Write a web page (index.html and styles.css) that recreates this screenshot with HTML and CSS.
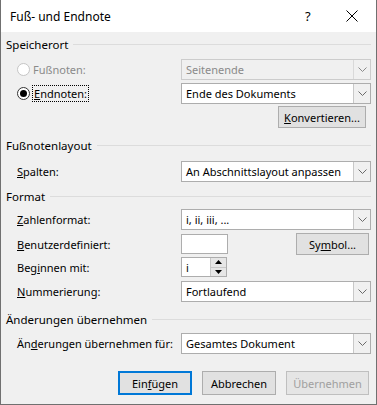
FILE: index.html
```html
<!DOCTYPE html>
<html lang="de">
<head>
  <meta charset="UTF-8" />
  <title>Fuß- und Endnote</title>
  <link rel="stylesheet" href="styles.css">
</head>
<body>
  <div class="window">
    <div class="titlebar">
      <span class="title">Fuß- und Endnote</span>
      <span class="help">?</span>
      <svg class="close" width="12" height="12" viewBox="0 0 12 12"><path d="M0.5 0.5 L11.5 11.5 M11.5 0.5 L0.5 11.5" stroke="#000" stroke-width="1"/></svg>
    </div>

    <div class="content">
      <div class="group first">
        <span>Speicherort</span><div class="line"></div>
      </div>

      <div class="row r-foot">
        <label class="lbl disabled"><span class="radio off"></span>Fußnoten:</label>
        <div class="combo disabled"><span class="val">Seitenende</span><span class="arrow"><svg width="9" height="5" viewBox="0 0 9 5"><path d="M0.5 0.5 L4.5 4.5 L8.5 0.5" fill="none" stroke="#8a8a8a"/></svg></span></div>
      </div>
      <div class="row r-end">
        <label class="lbl"><span class="radio on"></span><span class="focus"><u>E</u>ndnoten:</span></label>
        <div class="combo"><span class="val">Ende des Dokuments</span><span class="arrow"><svg width="9" height="5" viewBox="0 0 9 5"><path d="M0.5 0.5 L4.5 4.5 L8.5 0.5" fill="none" stroke="#6a6a6a"/></svg></span></div>
      </div>
      <div class="row r-conv">
        <button class="btn conv"><u>K</u>onvertieren...</button>
      </div>

      <div class="group g-layout">
        <span>Fußnotenlayout</span><div class="line"></div>
      </div>
      <div class="row r-spalten">
        <label class="lbl"><u>S</u>palten:</label>
        <div class="combo"><span class="val">An Abschnittslayout anpassen</span><span class="arrow"><svg width="9" height="5" viewBox="0 0 9 5"><path d="M0.5 0.5 L4.5 4.5 L8.5 0.5" fill="none" stroke="#6a6a6a"/></svg></span></div>
      </div>

      <div class="group g-format">
        <span>Format</span><div class="line"></div>
      </div>
      <div class="row r-zahl">
        <label class="lbl"><u>Z</u>ahlenformat:</label>
        <div class="combo"><span class="val">i, ii, iii, ...</span><span class="arrow"><svg width="9" height="5" viewBox="0 0 9 5"><path d="M0.5 0.5 L4.5 4.5 L8.5 0.5" fill="none" stroke="#6a6a6a"/></svg></span></div>
      </div>
      <div class="row r-custom">
        <label class="lbl"><u>B</u>enutzerdefiniert:</label>
        <div class="textbox"></div>
        <button class="btn sym">Sy<u>m</u>bol...</button>
      </div>
      <div class="row r-begin">
        <label class="lbl">Beg<u>i</u>nnen mit:</label>
        <div class="spin">
          <span class="val">i</span>
          <span class="spinbtns">
            <span class="up"><svg width="7" height="4" viewBox="0 0 7 4"><path d="M0 4 L3.5 0 L7 4 Z" fill="#000"/></svg></span>
            <span class="down"><svg width="7" height="4" viewBox="0 0 7 4"><path d="M0 0 L3.5 4 L7 0 Z" fill="#000"/></svg></span>
          </span>
        </div>
      </div>
      <div class="row r-num">
        <label class="lbl"><u>N</u>ummerierung:</label>
        <div class="combo"><span class="val">Fortlaufend</span><span class="arrow"><svg width="9" height="5" viewBox="0 0 9 5"><path d="M0.5 0.5 L4.5 4.5 L8.5 0.5" fill="none" stroke="#6a6a6a"/></svg></span></div>
      </div>

      <div class="group g-apply">
        <span>Änderungen übernehmen</span><div class="line"></div>
      </div>
      <div class="row r-apply">
        <label class="lbl">Än<u>d</u>erungen übernehmen für:</label>
        <div class="combo"><span class="val">Gesamtes Dokument</span><span class="arrow"><svg width="9" height="5" viewBox="0 0 9 5"><path d="M0.5 0.5 L4.5 4.5 L8.5 0.5" fill="none" stroke="#6a6a6a"/></svg></span></div>
      </div>

      <div class="buttons">
        <button class="btn default">Ein<u>f</u>ügen</button>
        <button class="btn">Abbrechen</button>
        <button class="btn off">Übernehmen</button>
      </div>
    </div>
  </div>
</body>
</html>
```

FILE: styles.css
```css
* {
  box-sizing: border-box;
}
body {
  margin: 0;
  font-family: "Noto Sans", "Open Sans", sans-serif;
  font-size: 11px;
  color: #000;
  background: #fff;
  white-space: nowrap;
}
.window {
  width: 377px;
  height: 405px;
  border: 1px solid #707070;
  border-top: none;
  background: #f0f0f0;
  display: flex;
  flex-direction: column;
  overflow: hidden;
}
.titlebar {
  flex-shrink: 0;
  height: 32px;
  background: #fff;
  display: flex;
  align-items: center;
  padding-left: 9px;
}
.title {
  flex-grow: 1;
  font-size: 12px;
}
.help {
  width: 12px;
  margin-right: 29px;
  font-size: 13px;
}
.close {
  margin-right: 18px;
}
.content {
  padding: 0 5px 0 5px;
}
.group {
  display: flex;
  align-items: center;
  height: 16px;
  margin-top: 4px;
  font-size: 11.5px;
}
.group span {
  padding-right: 5px;
}
.group .line {
  flex-grow: 1;
  border-top: 1px solid #dcdcdc;
}
.row {
  display: flex;
  align-items: center;
  padding-left: 11px;
}
.lbl {
  width: 164px;
  flex-shrink: 0;
  display: flex;
  align-items: center;
}
.lbl.disabled {
  color: #8a8a8a;
}
.radio {
  width: 13px;
  height: 13px;
  border-radius: 50%;
  border: 1px solid #333;
  background: #fff;
  margin-right: 3px;
  display: inline-flex;
  align-items: center;
  justify-content: center;
}
.radio.off {
  border-color: #c5c5c5;
}
.radio.on::after {
  content: "";
  width: 7px;
  height: 7px;
  border-radius: 50%;
  background: #000;
}
.focus {
  outline: 1px dotted #000;
  padding: 0 1px;
}
.combo {
  width: 190px;
  height: 21px;
  flex-shrink: 0;
  border: 1px solid #adadad;
  background: #fff;
  display: flex;
  align-items: stretch;
}
.combo .val {
  flex-grow: 1;
  padding-left: 4px;
  display: flex;
  align-items: center;
}
.combo .arrow {
  width: 17px;
  border-left: 1px solid #c8c8c8;
  background: #f0f0f0;
  display: flex;
  align-items: center;
  justify-content: center;
}
.combo.disabled {
  background: #f0f0f0;
  border-color: #cccccc;
  color: #8a8a8a;
}
.combo.disabled .arrow {
  border-left-color: #d9d9d9;
}
.btn {
  font-family: inherit;
  font-size: 11px;
  color: #000;
  background: #e1e1e1;
  border: 1px solid #adadad;
  height: 22px;
  padding: 0;
  flex-shrink: 0;
}
.r-foot {
  margin-top: 7px;
}
.r-end {
  margin-top: 3px;
}
.r-conv {
  margin-top: 2px;
  justify-content: flex-end;
  padding-right: 5px;
}
.conv {
  width: 88px;
}
.g-layout {
  margin-top: 9px;
}
.r-spalten {
  margin-top: 8px;
}
.g-format {
  margin-top: 6px;
}
.r-zahl {
  margin-top: 5px;
}
.r-custom {
  margin-top: 3px;
  height: 22px;
}
.textbox {
  width: 47px;
  height: 20px;
  border: 1px solid #adadad;
  background: #fff;
}
.sym {
  width: 73px;
  margin-left: 68px;
}
.r-begin {
  margin-top: 2px;
}
.spin {
  width: 46px;
  height: 20px;
  border: 1px solid #adadad;
  background: #fff;
  display: flex;
}
.spin .val {
  flex-grow: 1;
  padding-left: 4px;
  display: flex;
  align-items: center;
}
.spinbtns {
  width: 16px;
  display: flex;
  flex-direction: column;
  border-left: 1px solid #c8c8c8;
  background: #e6e6e6;
}
.spinbtns span {
  flex-grow: 1;
  display: flex;
  align-items: center;
  justify-content: center;
}
.spinbtns .up {
  border-bottom: 1px solid #c8c8c8;
}
.r-num {
  margin-top: 4px;
}
.g-apply {
  margin-top: 9px;
}
.r-apply {
  margin-top: 6px;
}
.buttons {
  display: flex;
  justify-content: flex-end;
  gap: 10px;
  margin-top: 17px;
  padding-right: 2px;
}
.buttons .btn {
  width: 74px;
  height: 24px;
}
.buttons .btn.default {
  border: 2px solid #0078d7;
}
.buttons .btn.off {
  width: 83px;
  color: #a0a0a0;
  border-color: #bfbfbf;
  background: #e5e5e5;
}
```
